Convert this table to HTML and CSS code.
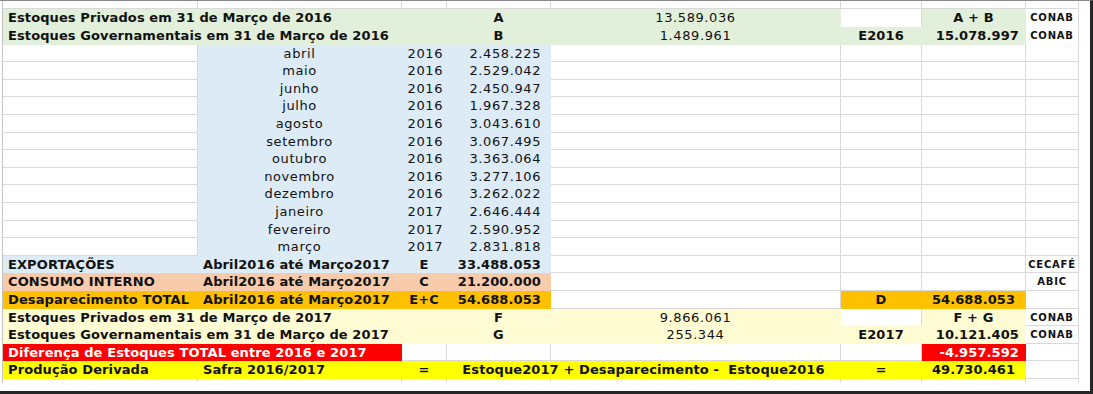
FILE: index.html
```html
<!DOCTYPE html>
<html lang="pt-BR">
<head>
<meta charset="utf-8">
<title>Estoques e Produção Derivada</title>
<link rel="stylesheet" href="styles.css">
</head>
<body>
<div class="frame">
  <div class="sheet">
    <!-- partial top row -->
    <div class="c"></div><div class="c"></div><div class="c"></div><div class="c"></div><div class="c"></div><div class="c"></div><div class="c"></div><div class="c"></div>

    <div class="c g l bd s3">Estoques Privados em 31 de Março de 2016</div>
    <div class="c g ctr bd">A</div>
    <div class="c g ctr">13.589.036</div>
    <div class="c wf"></div>
    <div class="c g ctr bd">A + B</div>
    <div class="c wf ctr sm">CONAB</div>

    <div class="c g l bd s3">Estoques Governamentais em 31 de Março de 2016</div>
    <div class="c g ctr bd">B</div>
    <div class="c g ctr">1.489.961</div>
    <div class="c g ctr bd">E2016</div>
    <div class="c g rt bd">15.078.997</div>
    <div class="c wf ctr sm">CONAB</div>

    <div class="c"></div><div class="c b ctr">abril</div><div class="c b yr">2016</div><div class="c b val">2.458.225</div><div class="c"></div><div class="c"></div><div class="c"></div><div class="c"></div>
    <div class="c"></div><div class="c b ctr">maio</div><div class="c b yr">2016</div><div class="c b val">2.529.042</div><div class="c"></div><div class="c"></div><div class="c"></div><div class="c"></div>
    <div class="c"></div><div class="c b ctr">junho</div><div class="c b yr">2016</div><div class="c b val">2.450.947</div><div class="c"></div><div class="c"></div><div class="c"></div><div class="c"></div>
    <div class="c"></div><div class="c b ctr">julho</div><div class="c b yr">2016</div><div class="c b val">1.967.328</div><div class="c"></div><div class="c"></div><div class="c"></div><div class="c"></div>
    <div class="c"></div><div class="c b ctr">agosto</div><div class="c b yr">2016</div><div class="c b val">3.043.610</div><div class="c"></div><div class="c"></div><div class="c"></div><div class="c"></div>
    <div class="c"></div><div class="c b ctr">setembro</div><div class="c b yr">2016</div><div class="c b val">3.067.495</div><div class="c"></div><div class="c"></div><div class="c"></div><div class="c"></div>
    <div class="c"></div><div class="c b ctr">outubro</div><div class="c b yr">2016</div><div class="c b val">3.363.064</div><div class="c"></div><div class="c"></div><div class="c"></div><div class="c"></div>
    <div class="c"></div><div class="c b ctr">novembro</div><div class="c b yr">2016</div><div class="c b val">3.277.106</div><div class="c"></div><div class="c"></div><div class="c"></div><div class="c"></div>
    <div class="c"></div><div class="c b ctr">dezembro</div><div class="c b yr">2016</div><div class="c b val">3.262.022</div><div class="c"></div><div class="c"></div><div class="c"></div><div class="c"></div>
    <div class="c"></div><div class="c b ctr">janeiro</div><div class="c b yr">2017</div><div class="c b val">2.646.444</div><div class="c"></div><div class="c"></div><div class="c"></div><div class="c"></div>
    <div class="c"></div><div class="c b ctr">fevereiro</div><div class="c b yr">2017</div><div class="c b val">2.590.952</div><div class="c"></div><div class="c"></div><div class="c"></div><div class="c"></div>
    <div class="c"></div><div class="c b ctr">março</div><div class="c b yr">2017</div><div class="c b val">2.831.818</div><div class="c"></div><div class="c"></div><div class="c"></div><div class="c"></div>

    <div class="c b l bd">EXPORTAÇÕES</div>
    <div class="c b l bd">Abril2016 até Março2017</div>
    <div class="c b ctr bd">E</div>
    <div class="c b val bd">33.488.053</div>
    <div class="c"></div><div class="c"></div><div class="c"></div>
    <div class="c ctr sm">CECAFÉ</div>

    <div class="c p l bd">CONSUMO INTERNO</div>
    <div class="c p l bd">Abril2016 até Março2017</div>
    <div class="c p ctr bd">C</div>
    <div class="c p val bd">21.200.000</div>
    <div class="c"></div><div class="c"></div><div class="c"></div>
    <div class="c ctr sm">ABIC</div>

    <div class="c o l bd">Desaparecimento TOTAL</div>
    <div class="c o l bd">Abril2016 até Março2017</div>
    <div class="c o ctr bd">E+C</div>
    <div class="c o val bd">54.688.053</div>
    <div class="c"></div>
    <div class="c o ctr bd">D</div>
    <div class="c o ctr bd">54.688.053</div>
    <div class="c"></div>

    <div class="c y l bd s3">Estoques Privados em 31 de Março de 2017</div>
    <div class="c y ctr bd">F</div>
    <div class="c y ctr">9.866.061</div>
    <div class="c wf"></div>
    <div class="c y ctr bd">F + G</div>
    <div class="c ctr sm">CONAB</div>

    <div class="c y l bd s3">Estoques Governamentais em 31 de Março de 2017</div>
    <div class="c y ctr bd">G</div>
    <div class="c y ctr">255.344</div>
    <div class="c y ctr bd">E2017</div>
    <div class="c y rt bd">10.121.405</div>
    <div class="c ctr sm">CONAB</div>

    <div class="c r l bd s2">Diferença de Estoques TOTAL entre 2016 e 2017</div>
    <div class="c"></div><div class="c"></div><div class="c"></div><div class="c"></div>
    <div class="c r rt bd">-4.957.592</div>
    <div class="c"></div>

    <div class="c yy l bd">Produção Derivada</div>
    <div class="c yy l bd">Safra 2016/2017</div>
    <div class="c yy ctr bd">=</div>
    <div class="c yy ctr bd s2 pre">Estoque2017 + Desaparecimento -  Estoque2016</div>
    <div class="c yy ctr bd">=</div>
    <div class="c yy ctr bd">49.730.461</div>
    <div class="c"></div>

    <!-- partial bottom row -->
    <div class="c end"></div><div class="c end"></div><div class="c end"></div><div class="c end"></div><div class="c end"></div><div class="c end"></div><div class="c end"></div><div class="c end"></div>
  </div>
</div>
</body>
</html>
```

FILE: styles.css
```css
* {
  box-sizing: border-box;
}

body {
  margin: 0;
  background: #ffffff;
  font-family: "DejaVu Sans", "Liberation Sans", sans-serif;
}

.frame {
  width: 1093px;
  height: 394px;
  background: #ffffff;
  border-top: 1px solid #8a8a8a;
  border-right: 3px solid #262626;
  border-bottom: 3px solid #262626;
  padding-left: 2px;
}

.sheet {
  display: grid;
  grid-template-columns: 195px 204px 45px 104px 290px 81px 104px 53px;
  grid-template-rows: 8.3px repeat(21, 17.62px) 4px;
  width: 1077px;
  border-left: 1px solid #c4c4c4;
  font-size: 13px;
  letter-spacing: 0.6px;
  color: #111111;
}

.c {
  border-right: 1px solid #d9d9d9;
  border-bottom: 1px solid #d9d9d9;
  padding-top: 1px;
  line-height: 16px;
  white-space: nowrap;
  overflow: hidden;
}

.c.end {
  border-bottom-color: transparent;
}

.wf {
  border-color: #ffffff #d9d9d9 #ffffff #ffffff;
}

/* fills */
.g  { background: #e2efda; border-color: transparent; }
.b  { background: #ddebf7; border-color: transparent; }
.p  { background: #f8cbad; border-color: transparent; }
.o  { background: #ffc000; border-color: transparent; }
.y  { background: #fffcd4; border-color: transparent; }
.r  { background: #ff0000; border-color: transparent; color: #ffffff; }
.yy { background: #ffff00; border-color: transparent; }

/* spans */
.s2 { grid-column: span 2; }
.s3 { grid-column: span 3; }

/* alignment */
.l   { padding-left: 5px; }
.ctr { text-align: center; }
.rt  { text-align: right; padding-right: 6px; }
.yr  { text-align: right; padding-right: 3px; }
.val { text-align: right; padding-right: 9px; }
.pre { white-space: pre; }

/* type */
.bd {
  font-weight: 700;
  font-size: 13px;
  letter-spacing: 0.1px;
}

.sm {
  font-weight: 700;
  font-size: 10px;
  letter-spacing: 0.8px;
}
```
